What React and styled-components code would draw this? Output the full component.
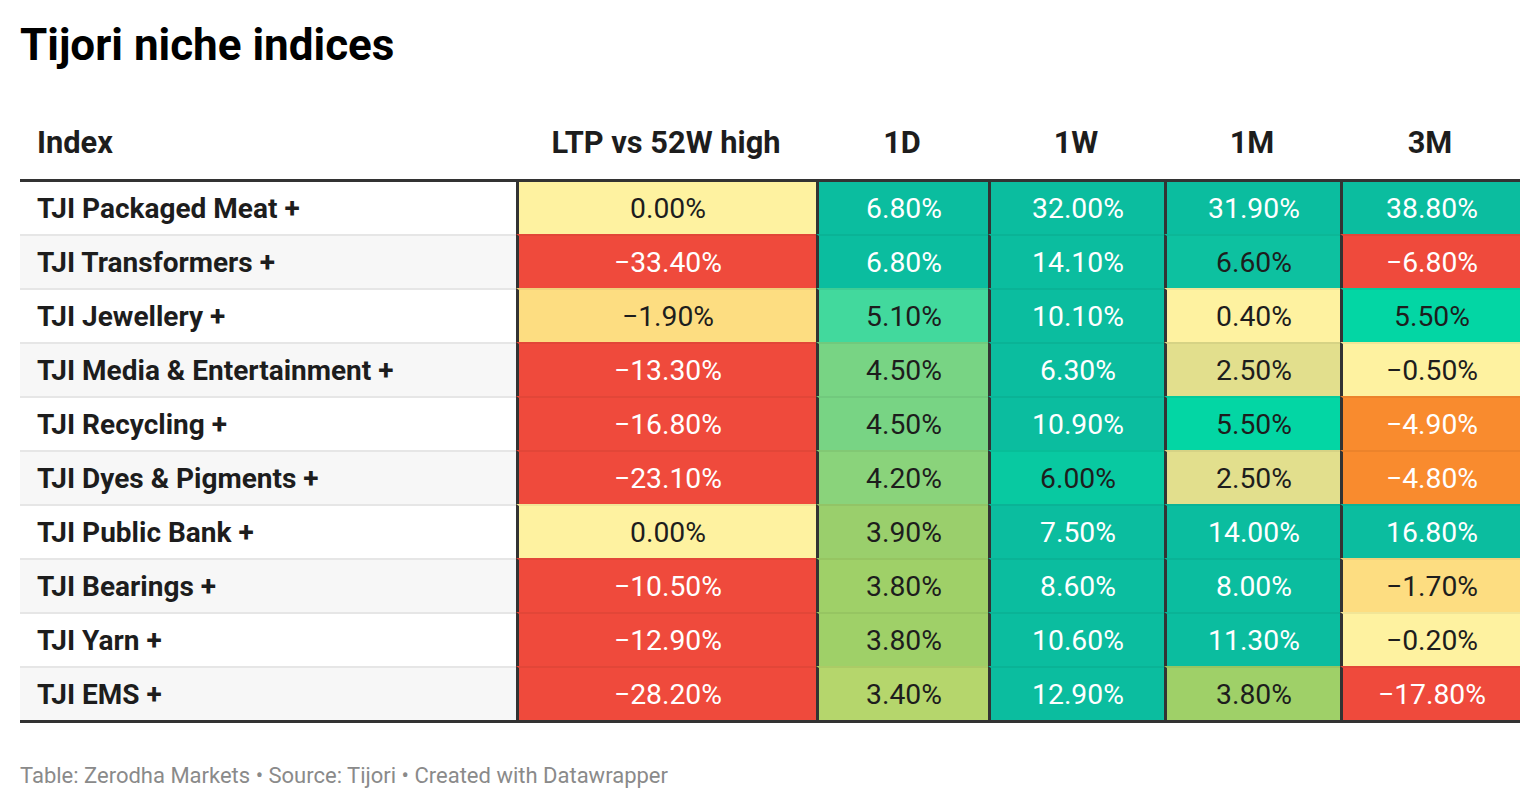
import React from 'react';
import styled, { createGlobalStyle } from 'styled-components';

const GlobalStyle = createGlobalStyle`
	html, body {
		margin: 0;
		padding: 0;
		background: #ffffff;
	}
	body {
		font-family: Roboto, 'Liberation Sans', sans-serif;
		color: #1d1d1d;
	}
`;

const COLORS = {
	yellow: '#fef2a0',
	amber: '#fddd81',
	red: '#ef4a3c',
	teal: '#0bbd9f',
	teal2: '#0dc1a0',
	mint: '#03d6a4',
	aqua: '#08c9a1',
	green1: '#42d99d',
	green2: '#78d484',
	green3: '#8ad37b',
	green4: '#9acf6c',
	green5: '#9fd068',
	green6: '#b5d66c',
	olive: '#e2df8d',
	orange: '#f98b2e',
};

// [value, colour key, light text]
const rows = [
	['TJI Packaged Meat +', [['0.00%', 'yellow'], ['6.80%', 'teal', 1], ['32.00%', 'teal', 1], ['31.90%', 'teal', 1], ['38.80%', 'teal', 1]]],
	['TJI Transformers +', [['−33.40%', 'red', 1], ['6.80%', 'teal', 1], ['14.10%', 'teal', 1], ['6.60%', 'teal2'], ['−6.80%', 'red', 1]]],
	['TJI Jewellery +', [['−1.90%', 'amber'], ['5.10%', 'green1'], ['10.10%', 'teal', 1], ['0.40%', 'yellow'], ['5.50%', 'mint']]],
	['TJI Media & Entertainment +', [['−13.30%', 'red', 1], ['4.50%', 'green2'], ['6.30%', 'teal', 1], ['2.50%', 'olive'], ['−0.50%', 'yellow']]],
	['TJI Recycling +', [['−16.80%', 'red', 1], ['4.50%', 'green2'], ['10.90%', 'teal', 1], ['5.50%', 'mint'], ['−4.90%', 'orange', 1]]],
	['TJI Dyes & Pigments +', [['−23.10%', 'red', 1], ['4.20%', 'green3'], ['6.00%', 'aqua'], ['2.50%', 'olive'], ['−4.80%', 'orange', 1]]],
	['TJI Public Bank +', [['0.00%', 'yellow'], ['3.90%', 'green4'], ['7.50%', 'teal', 1], ['14.00%', 'teal', 1], ['16.80%', 'teal', 1]]],
	['TJI Bearings +', [['−10.50%', 'red', 1], ['3.80%', 'green5'], ['8.60%', 'teal', 1], ['8.00%', 'teal', 1], ['−1.70%', 'amber']]],
	['TJI Yarn +', [['−12.90%', 'red', 1], ['3.80%', 'green5'], ['10.60%', 'teal', 1], ['11.30%', 'teal', 1], ['−0.20%', 'yellow']]],
	['TJI EMS +', [['−28.20%', 'red', 1], ['3.40%', 'green6'], ['12.90%', 'teal', 1], ['3.80%', 'green5'], ['−17.80%', 'red', 1]]],
];

const headers = ['LTP vs 52W high', '1D', '1W', '1M', '3M'];

const Page = styled.div`
	padding: 19px 20px 0 20px;
	width: 1500px;
`;

const Title = styled.h1`
	margin: 0;
	font-size: 44px;
	line-height: 52px;
	font-weight: 700;
	color: #000;
`;

const Table = styled.div`
	display: grid;
	grid-template-columns: 496px 300px 172px 176px 176px 180px;
	border-bottom: 3px solid #333333;
`;

const HeadCell = styled.div`
	height: 111px;
	box-sizing: border-box;
	display: flex;
	align-items: flex-end;
	justify-content: ${(p) => (p.$left ? 'flex-start' : 'center')};
	padding: 0 0 18px ${(p) => (p.$left ? '17px' : '0')};
	font-size: 30.8px;
	line-height: 36px;
	font-weight: 700;
	color: #1d1d1d;
	border-bottom: 3px solid #333333;
`;

const NameCell = styled.div`
	box-sizing: border-box;
	display: flex;
	align-items: center;
	padding: 0 0 0 17px;
	font-size: 28px;
	font-weight: 700;
	color: #1d1d1d;
	background: ${(p) => (p.$even ? '#f7f7f7' : '#ffffff')};
	border-top: ${(p) => (p.$first ? 'none' : '2px solid #e6e6e6')};
	height: ${(p) => (p.$first ? '52px' : '54px')};
`;

const ValueCell = styled.div`
	box-sizing: border-box;
	display: flex;
	align-items: center;
	justify-content: center;
	font-size: 28.3px;
	font-weight: 400;
	background: ${(p) => p.$bg};
	color: ${(p) => (p.$light ? '#ffffff' : '#1d1d1d')};
	border-left: 3px solid #333333;
	border-top: ${(p) => (p.$first ? 'none' : '2px solid rgba(0, 0, 0, 0.05)')};
	height: ${(p) => (p.$first ? '52px' : '54px')};
	padding-left: 1px;
`;

const Footer = styled.div`
	margin-top: 41px;
	font-size: 22px;
	line-height: 24px;
	color: #8a8a8a;
`;

export default function App() {
	return (
		<>
			<GlobalStyle />
			<Page>
				<Title>Tijori niche indices</Title>
				<Table>
					<HeadCell $left>Index</HeadCell>
					{headers.map((h) => (
						<HeadCell key={h}>{h}</HeadCell>
					))}
					{rows.map(([name, vals], i) => (
						<React.Fragment key={name}>
							<NameCell $even={i % 2 === 1} $first={i === 0}>
								{name}
							</NameCell>
							{vals.map(([v, c, light], j) => (
								<ValueCell key={j} $bg={COLORS[c]} $light={!!light} $first={i === 0}>
									{v}
								</ValueCell>
							))}
						</React.Fragment>
					))}
				</Table>
				<Footer>Table: Zerodha Markets • Source: Tijori • Created with Datawrapper</Footer>
			</Page>
		</>
	);
}
